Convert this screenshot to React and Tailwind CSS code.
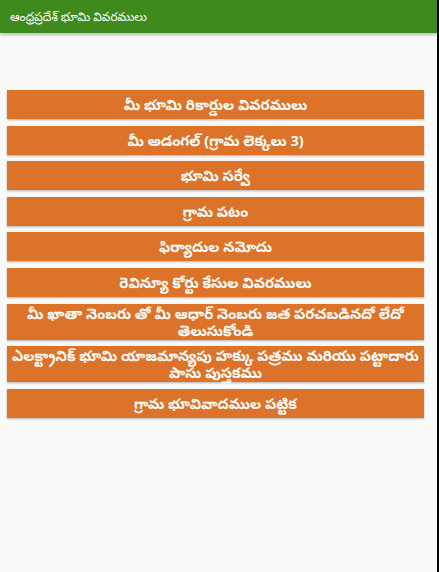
const ITEMS = [
  ['మీ భూమి రికార్డుల వివరములు'],
  ['మీ అడంగల్ (గ్రామ లెక్కలు 3)'],
  ['భూమి సర్వే'],
  ['గ్రామ పటం'],
  ['ఫిర్యాదుల నమోదు'],
  ['రెవిన్యూ కోర్టు కేసుల వివరములు'],
  ['మీ ఖాతా నెంబరు తో మీ ఆధార్ నెంబరు జత పరచబడినదో లేదో', 'తెలుసుకోండి'],
  ['ఎలక్ట్రానిక్ భూమి యాజమాన్యపు హక్కు పత్రము మరియు పట్టాదారు', 'పాసు పుస్తకము'],
  ['గ్రామ భూవివాదముల పట్టిక'],
]

export default function App() {
  return (
    <div className="h-[572px] w-[439px] flex bg-black font-['Noto_Sans','Noto_Sans_Telugu',sans-serif]">
      <div className="w-[437px] h-full bg-[#fafafa] flex flex-col">
        {/* toolbar */}
        <div className="h-[33px] bg-[#3f8a1c] flex items-center px-[10px] shadow-[0_2px_3px_rgba(0,0,0,0.25)]">
          <span className="text-white text-[12px]">ఆంధ్రప్రదేశ్ భూమి వివరములు</span>
        </div>

        <div className="pt-[57px] pl-[7px] pr-[13px] flex flex-col gap-[6.6px]">
          {ITEMS.map((lines, i) => (
            <button
              key={i}
              className="min-h-[29px] bg-[#dd7229] text-white text-[14.5px] font-bold leading-[17px] py-[1px] flex flex-col items-center justify-center shadow-[0_1px_2px_rgba(0,0,0,0.3)]"
            >
              {lines.map(l => (
                <span key={l} className="whitespace-nowrap">{l}</span>
              ))}
            </button>
          ))}
        </div>
      </div>
    </div>
  )
}
